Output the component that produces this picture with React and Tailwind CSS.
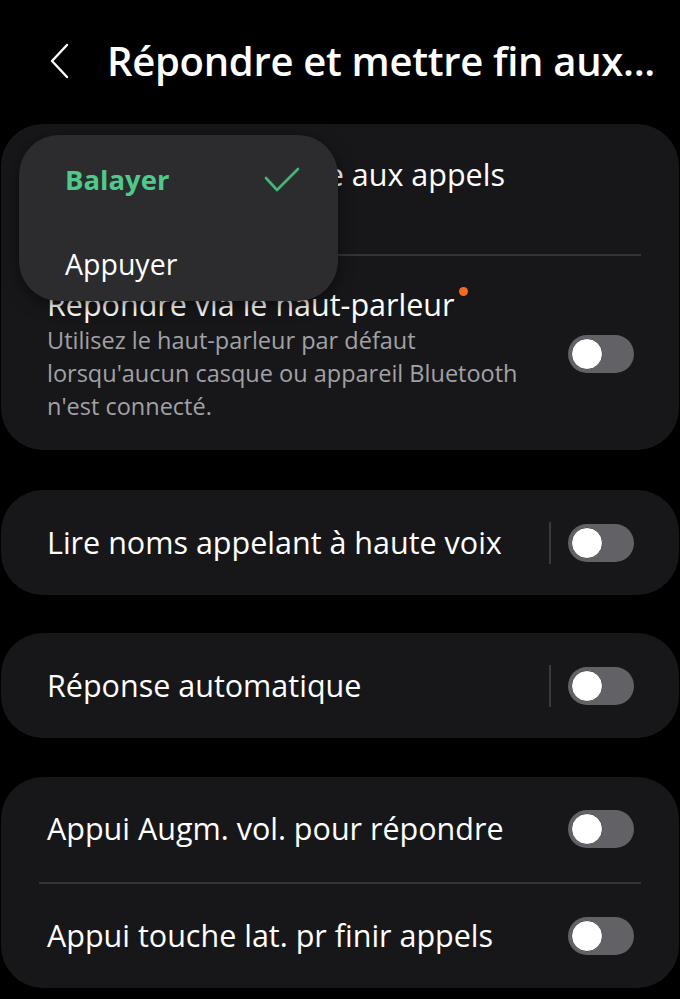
import React from "react";

const font = { fontFamily: "'Open Sans', 'Noto Sans', sans-serif" };

function Toggle() {
  return (
    <div className="w-[66px] h-[38px] rounded-full bg-[#626166] flex items-center pl-[3px] shrink-0">
      <div className="w-[32px] h-[32px] rounded-full bg-white border-[1.5px] border-[#4b4b4f]" />
    </div>
  );
}

function Card({ children, className = "" }) {
  return (
    <div className={"mx-[1px] rounded-[42px] bg-[#171719] " + className}>{children}</div>
  );
}

export default function App() {
  return (
    <div className="relative w-[680px] h-[999px] bg-black overflow-hidden text-white" style={font}>
      {/* header */}
      <div className="h-[124px] flex items-center pl-[48px] pb-[2px]">
        <svg width="22" height="36" viewBox="0 0 22 36" className="shrink-0">
          <path d="M19 2 L4 18 L19 34" fill="none" stroke="white" strokeWidth="2.4" strokeLinecap="round" strokeLinejoin="round" />
        </svg>
        <div className="ml-[37px] text-[40px] font-semibold tracking-[-0.3px] leading-none">Répondre et mettre fin aux...</div>
      </div>

      {/* card 1 */}
      <Card className="h-[326px] flex flex-col">
        <div className="px-[46px] h-[130px] pt-[31px]">
          <div className="text-[30.5px] leading-[38px]">Méthode de réponse aux appels</div>
        </div>
        <div className="mx-[38px] h-[2px] bg-[#343437]" />
        <div className="pl-[46px] pr-[45px] pt-[29px] flex items-center">
          <div className="flex-1">
            <div className="text-[30.5px] leading-[38px] relative inline-block">
              Répondre via le haut-parleur
              <span className="absolute -right-[13px] top-[2px] w-[9px] h-[9px] rounded-full bg-[#f36b21]" />
            </div>
            <div className="text-[23.5px] leading-[33px] text-[#a2a2a6] w-[490px] mt-[1px]">
              Utilisez le haut-parleur par défaut lorsqu'aucun casque ou appareil Bluetooth n'est connecté.
            </div>
          </div>
          <Toggle />
        </div>
      </Card>

      {/* card 2 */}
      <Card className="mt-[40px] h-[105px] pl-[46px] pr-[45px] flex items-center">
        <div className="flex-1 text-[30.5px]">Lire noms appelant à haute voix</div>
        <div className="w-[2px] h-[42px] bg-[#3a3a3d] mr-[17px]" />
        <Toggle />
      </Card>

      {/* card 3 */}
      <Card className="mt-[38px] h-[105px] pl-[46px] pr-[45px] flex items-center">
        <div className="flex-1 text-[30.5px]">Réponse automatique</div>
        <div className="w-[2px] h-[42px] bg-[#3a3a3d] mr-[17px]" />
        <Toggle />
      </Card>

      {/* card 4 */}
      <Card className="mt-[39px] h-[211px] flex flex-col">
        <div className="flex-1 flex items-center pl-[46px] pr-[45px]">
          <div className="flex-1 text-[30.5px]">Appui Augm. vol. pour répondre</div>
          <Toggle />
        </div>
        <div className="mx-[38px] h-[2px] bg-[#343437]" />
        <div className="flex-1 flex items-center pl-[46px] pr-[45px]">
          <div className="flex-1 text-[30.5px]">Appui touche lat. pr finir appels</div>
          <Toggle />
        </div>
      </Card>

      {/* popup */}
      <div className="absolute left-[19px] top-[135px] w-[319px] h-[166px] rounded-[40px] bg-[#2c2c2f] shadow-[0_4px_16px_rgba(0,0,0,0.5)] flex flex-col pt-[5px]">
        <div className="flex items-center h-[84px] pl-[46px] pr-[38px]">
          <div className="flex-1 text-[27.5px] font-bold text-[#4fc98a]">Balayer</div>
          <svg width="36" height="26" viewBox="0 0 36 26">
            <path d="M2 11 L13 23 L34 2" fill="none" stroke="#3fb879" strokeWidth="2.6" strokeLinecap="round" strokeLinejoin="round" />
          </svg>
        </div>
        <div className="flex items-center h-[86px] pl-[46px] pt-[8px] text-[28.5px]">Appuyer</div>
      </div>
    </div>
  );
}
